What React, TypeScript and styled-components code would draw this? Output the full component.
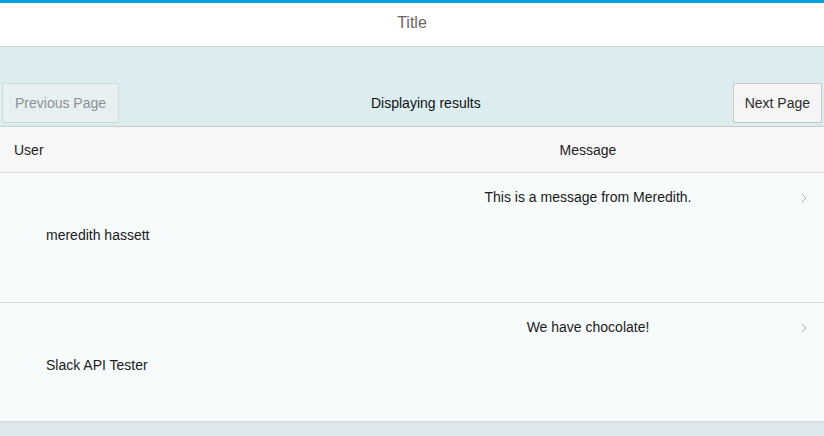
import React from "react";
import styled, { createGlobalStyle } from "styled-components";

const Global = createGlobalStyle`
  *, *::before, *::after { box-sizing: border-box; }
  html, body { margin: 0; padding: 0; }
  body {
    font-family: "Liberation Sans", Arial, sans-serif;
    font-size: 14px;
    line-height: 16px;
    color: #222;
    background: #dce8ee;
    width: 824px;
    height: 436px;
    overflow: hidden;
  }
`;

const Page = styled.div`
  display: flex;
  flex-direction: column;
  width: 824px;
  height: 436px;
  background: #dce8ee;
`;

const Header = styled.header`
  height: 47px;
  border-top: 3px solid #009ddf;
  border-bottom: 1px solid #d6d6d6;
  background: #fff;
  display: flex;
  align-items: center;
  justify-content: center;
  padding-bottom: 3px;
  font-size: 16px;
  color: #6b6561;
`;

const Toolbar = styled.div`
  height: 80px;
  background: #dcedf0;
  border-bottom: 1px solid #c9cccd;
  display: flex;
  justify-content: space-between;
  align-items: flex-end;
  padding: 0 2px 3px 2px;
`;

const Button = styled.button<{ $disabled?: boolean }>`
  height: 40px;
  padding: 0 ${(p) => (p.$disabled ? "12px" : "11px")};
  font-family: inherit;
  font-size: 14px;
  border-radius: 2px;
  border: 1px solid ${(p) => (p.$disabled ? "#cfdadc" : "#c6c6c6")};
  background: ${(p) => (p.$disabled ? "#e7f0f1" : "#f5f5f5")};
  color: ${(p) => (p.$disabled ? "#8b9192" : "#2b2b2b")};
`;

const Status = styled.div`
  align-self: flex-end;
  height: 40px;
  display: flex;
  align-items: center;
  color: #111;
`;

const TableHead = styled.div`
  height: 46px;
  background: #f7f7f7;
  border-bottom: 1px solid #dcdcdc;
  display: grid;
  grid-template-columns: 352px 472px;
  align-items: center;
  color: #222;
`;

const HeadCell = styled.div<{ $center?: boolean }>`
  padding-left: ${(p) => (p.$center ? "0" : "14px")};
  text-align: ${(p) => (p.$center ? "center" : "left")};
`;

const Row = styled.div<{ $h: number }>`
  position: relative;
  height: ${(p) => p.$h}px;
  background: #f7fbfc;
  border-bottom: 1px solid #d9dcdd;
  display: grid;
  grid-template-columns: 352px 472px;
  align-items: start;
  color: #1a1a1a;
`;

const UserCell = styled.div`
  padding-left: 46px;
  padding-top: 54px;
`;

const MessageCell = styled.div`
  text-align: center;
  padding-top: 16px;
`;

const Chevron = styled.svg`
  position: absolute;
  right: 17px;
  top: 20px;
`;

const Footer = styled.div`
  flex: 1;
  background: #dce8ee;
`;

const rows = [
  { user: "meredith hassett", message: "This is a message from Meredith.", h: 130 },
  { user: "Slack API Tester", message: "We have chocolate!", h: 119 },
];

export default function App() {
  return (
    <Page>
      <Global />
      <Header>Title</Header>
      <Toolbar>
        <Button $disabled>Previous Page</Button>
        <Status>Displaying results</Status>
        <Button>Next Page</Button>
      </Toolbar>
      <TableHead>
        <HeadCell>User</HeadCell>
        <HeadCell $center>Message</HeadCell>
      </TableHead>
      {rows.map((r) => (
        <Row key={r.user} $h={r.h}>
          <UserCell>{r.user}</UserCell>
          <MessageCell>{r.message}</MessageCell>
          <Chevron width="6" height="10" viewBox="0 0 6 10">
            <path d="M1 1 L5 5 L1 9" fill="none" stroke="#a9adb0" strokeWidth="1" />
          </Chevron>
        </Row>
      ))}
      <Footer />
    </Page>
  );
}
